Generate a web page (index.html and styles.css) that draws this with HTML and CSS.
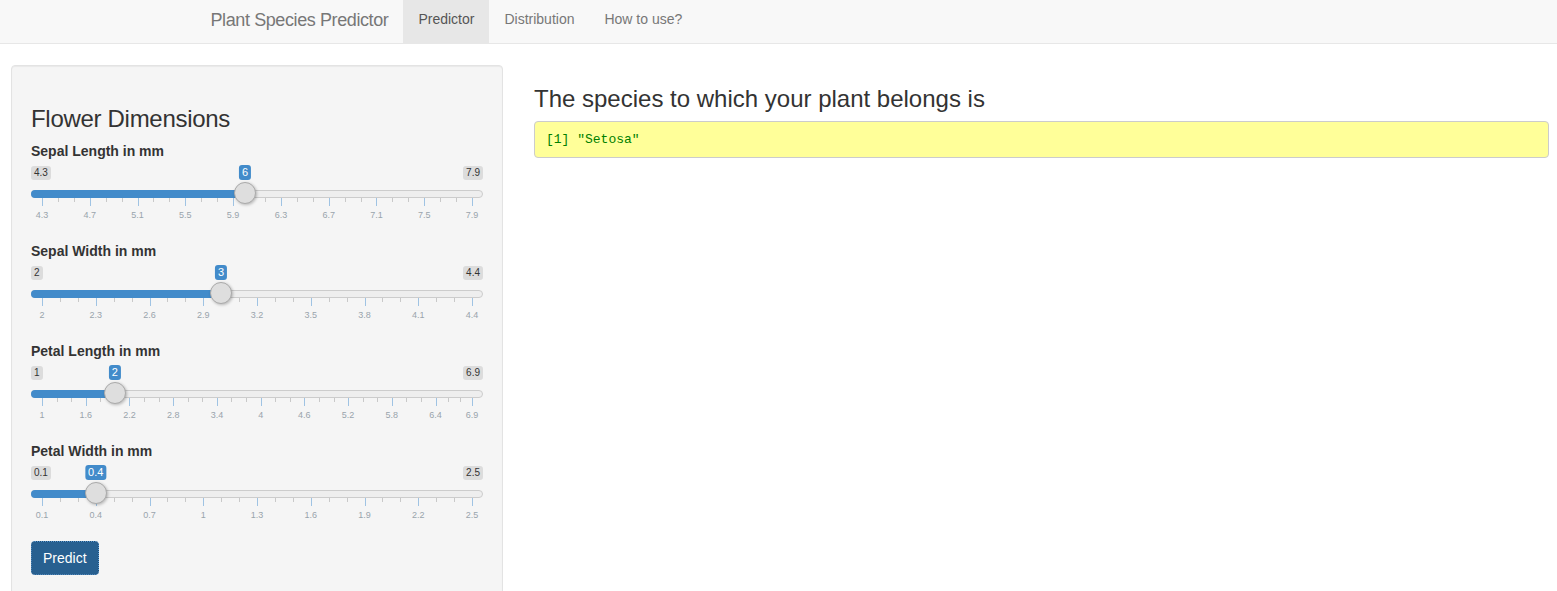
FILE: index.html
```html
<!DOCTYPE html>
<html lang="en">
<head>
<meta charset="utf-8">
<title>Plant Species Predictor</title>
<link rel="stylesheet" href="styles.css">
</head>
<body>
<nav class="navbar">
  <div class="navbar-container">
    <span class="navbar-brand">Plant Species Predictor</span>
    <ul class="nav">
      <li class="active"><a href="#">Predictor</a></li>
      <li><a href="#">Distribution</a></li>
      <li><a href="#">How to use?</a></li>
    </ul>
  </div>
</nav>
<main class="main">
  <aside class="sidebar">
    <div class="well">
      <h3 class="well-title">Flower Dimensions</h3>

      <div class="form-group">
        <label class="control-label">Sepal Length in mm</label>
        <div class="irs" data-min="4.3" data-max="7.9" data-value="6" data-ticks="4.3,4.7,5.1,5.5,5.9,6.3,6.7,7.1,7.5,7.9">
          <span class="irs-line"></span>
          <span class="irs-bar"></span>
          <span class="irs-min">4.3</span>
          <span class="irs-max">7.9</span>
          <div class="irs-grid"></div>
          <span class="irs-handle"></span>
          <span class="irs-single">6</span>
        </div>
      </div>

      <div class="form-group">
        <label class="control-label">Sepal Width in mm</label>
        <div class="irs" data-min="2" data-max="4.4" data-value="3" data-ticks="2,2.3,2.6,2.9,3.2,3.5,3.8,4.1,4.4">
          <span class="irs-line"></span>
          <span class="irs-bar"></span>
          <span class="irs-min">2</span>
          <span class="irs-max">4.4</span>
          <div class="irs-grid"></div>
          <span class="irs-handle"></span>
          <span class="irs-single">3</span>
        </div>
      </div>

      <div class="form-group">
        <label class="control-label">Petal Length in mm</label>
        <div class="irs" data-min="1" data-max="6.9" data-value="2" data-ticks="1,1.6,2.2,2.8,3.4,4,4.6,5.2,5.8,6.4,6.9">
          <span class="irs-line"></span>
          <span class="irs-bar"></span>
          <span class="irs-min">1</span>
          <span class="irs-max">6.9</span>
          <div class="irs-grid"></div>
          <span class="irs-handle"></span>
          <span class="irs-single">2</span>
        </div>
      </div>

      <div class="form-group">
        <label class="control-label">Petal Width in mm</label>
        <div class="irs" data-min="0.1" data-max="2.5" data-value="0.4" data-ticks="0.1,0.4,0.7,1,1.3,1.6,1.9,2.2,2.5">
          <span class="irs-line"></span>
          <span class="irs-bar"></span>
          <span class="irs-min">0.1</span>
          <span class="irs-max">2.5</span>
          <div class="irs-grid"></div>
          <span class="irs-handle"></span>
          <span class="irs-single">0.4</span>
        </div>
      </div>

      <button class="btn-primary" type="button">Predict</button>
    </div>
  </aside>
  <section class="content">
    <h3 class="result-title">The species to which your plant belongs is</h3>
    <pre class="result">[1] "Setosa"</pre>
  </section>
</main>
<script src="script.js"></script>
</body>
</html>
```

FILE: styles.css
```css
* {
  box-sizing: border-box;
}

html, body {
  margin: 0;
  padding: 0;
}

body {
  font-family: "Liberation Sans", Arial, sans-serif;
  font-size: 14px;
  line-height: 1.42857;
  color: #333;
  background: #fff;
}

/* Navbar */
.navbar {
  height: 44px;
  background: #f8f8f8;
  border-bottom: 1px solid #e7e7e7;
  margin-bottom: 21px;
}

.navbar-container {
  width: 1170px;
  margin: 0 auto;
  padding: 0 15px;
  display: flex;
  height: 43px;
}

.navbar-brand {
  font-size: 18px;
  line-height: 20px;
  letter-spacing: -0.4px;
  color: #777;
  padding: 10px 15px 13px 2px;
}

.nav {
  list-style: none;
  margin: 0;
  padding: 0;
  display: flex;
}

.nav li a {
  display: block;
  padding: 9px 15px 14px;
  line-height: 20px;
  color: #777;
  text-decoration: none;
}

.nav li.active a {
  background: #e7e7e7;
  color: #555;
}

/* Main layout */
.main {
  display: flex;
  align-items: flex-start;
  gap: 31px;
  padding: 0 8px 0 11px;
}

.sidebar {
  width: 492px;
  flex: none;
}

.content {
  flex: 1;
  min-width: 0;
}

.well {
  background: #f5f5f5;
  border: 1px solid #e3e3e3;
  border-radius: 4px;
  padding: 19px;
  box-shadow: inset 0 1px 1px rgba(0, 0, 0, 0.05);
  min-height: 560px;
}

.well-title,
.result-title {
  font-size: 24px;
  font-weight: 500;
  line-height: 1.1;
  margin: 21px 0 9px;
  color: #333;
}

.well-title {
  letter-spacing: -0.3px;
}

.form-group {
  margin-bottom: 15px;
}

.control-label {
  display: inline-block;
  font-weight: bold;
  margin-bottom: 5px;
  line-height: 20px;
}

/* Range slider */
.irs {
  position: relative;
  height: 60px;
  display: block;
}

.irs-line {
  position: absolute;
  left: 0;
  right: 0;
  top: 24px;
  height: 8px;
  background: #eee;
  border: 1px solid #ccc;
  border-radius: 16px;
}

.irs-bar {
  position: absolute;
  left: 0;
  top: 24px;
  height: 8px;
  background: #428bca;
  border-radius: 8px 0 0 8px;
}

.irs-min,
.irs-max {
  position: absolute;
  top: 0;
  font-size: 10px;
  line-height: 12px;
  padding: 1px 3px;
  color: #333;
  background: rgba(0, 0, 0, 0.1);
  border-radius: 3px;
}

.irs-min {
  left: 0;
}

.irs-max {
  right: 0;
}

.irs-single {
  position: absolute;
  top: -1px;
  transform: translateX(-50%);
  font-size: 11px;
  line-height: 13px;
  padding: 1px 3px;
  color: #fff;
  background: #428bca;
  border-radius: 3px;
  white-space: nowrap;
}

.irs-handle {
  position: absolute;
  top: 16px;
  width: 22px;
  height: 22px;
  transform: translateX(-50%);
  background: #dedede;
  border: 1px solid #aaa;
  border-radius: 50%;
  box-shadow: 1px 1px 3px rgba(0, 0, 0, 0.25);
}

.irs-grid {
  position: absolute;
  left: 11px;
  right: 11px;
  top: 32px;
  height: 24px;
}

.irs-grid-pol {
  position: absolute;
  top: 0;
  width: 1px;
  height: 8px;
  background: #9fc3e3;
}

.irs-grid-pol.small {
  height: 4px;
  background: #c9c9c9;
}

.irs-grid-text {
  position: absolute;
  top: 12px;
  transform: translateX(-50%);
  font-size: 9px;
  line-height: 10px;
  color: #99a4ac;
  white-space: nowrap;
}

/* Button */
.btn-primary {
  font-family: inherit;
  font-size: 14px;
  line-height: 20px;
  padding: 6px 11px;
  color: #fff;
  background: #286090;
  border: 1px solid #204d74;
  border-radius: 4px;
  outline: 1px dotted #5b9bd5;
  outline-offset: -1px;
  cursor: pointer;
}

/* Result */
.result {
  margin: 0;
  padding: 9.5px 11px;
  font-family: "Liberation Mono", "Courier New", monospace;
  font-size: 13px;
  line-height: 16px;
  color: #008000;
  background: #ffff99;
  border: 1px solid #ccc;
  border-radius: 4px;
}
```

FILE: script.js
```js
document.querySelectorAll('.irs').forEach(function (s) {
  var min = parseFloat(s.dataset.min);
  var max = parseFloat(s.dataset.max);
  var val = parseFloat(s.dataset.value);
  var ticks = s.dataset.ticks.split(',');
  var f = (val - min) / (max - min);
  var pos = 'calc(11px + ' + f.toFixed(5) + ' * (100% - 22px))';
  s.querySelector('.irs-bar').style.width = pos;
  s.querySelector('.irs-handle').style.left = pos;
  s.querySelector('.irs-single').style.left = pos;

  var grid = s.querySelector('.irs-grid');
  var prev = null;
  ticks.forEach(function (t) {
    var p = (parseFloat(t) - min) / (max - min) * 100;
    if (prev !== null) {
      for (var z = 1; z <= 2; z++) {
        var sm = document.createElement('span');
        sm.className = 'irs-grid-pol small';
        sm.style.left = (prev + (p - prev) * z / 3).toFixed(3) + '%';
        grid.appendChild(sm);
      }
    }
    var big = document.createElement('span');
    big.className = 'irs-grid-pol';
    big.style.left = p.toFixed(3) + '%';
    grid.appendChild(big);
    var txt = document.createElement('span');
    txt.className = 'irs-grid-text';
    txt.style.left = p.toFixed(3) + '%';
    txt.textContent = t;
    grid.appendChild(txt);
    prev = p;
  });
});
```
